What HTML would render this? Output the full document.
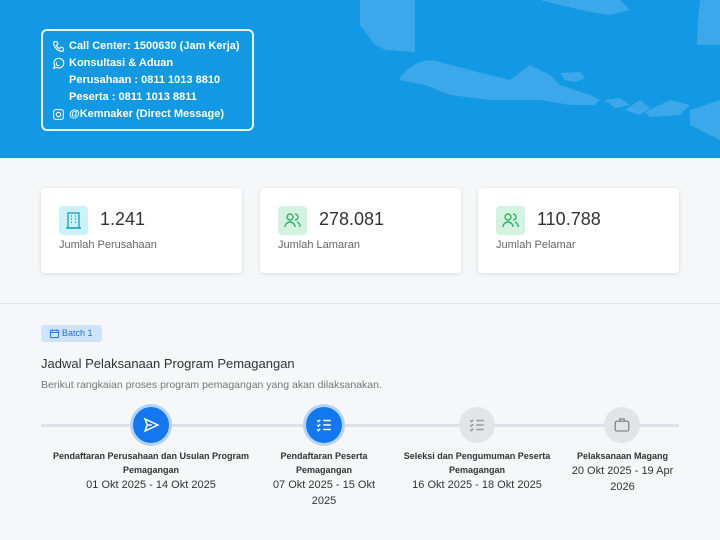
<!DOCTYPE html>
<html><head><meta charset="utf-8"><style>
*{margin:0;padding:0;box-sizing:border-box}
body{width:720px;height:540px;overflow:hidden;background:#f6f7f9;font-family:"Liberation Sans",sans-serif;position:relative}
.hdr{position:absolute;left:0;top:0;width:720px;height:158px;background:#1398e3;overflow:hidden}
.box{position:absolute;left:41px;top:29px;width:213px;height:102px;border:2px solid #e6f3fc;border-radius:6px;color:#fff;font-weight:bold;font-size:11px}
.box div{position:absolute;left:26px;white-space:nowrap}
.card{position:absolute;top:188px;width:201px;height:85px;background:#fff;border-radius:4px;box-shadow:0 1px 4px rgba(0,0,0,.12)}
.ic{position:absolute;left:18px;top:18px;width:29px;height:29px;border-radius:4px}
.num{position:absolute;left:59px;top:21px;font-size:18px;color:#333}
.lbl{position:absolute;left:18px;top:51px;font-size:11px;color:#666}
.step{position:absolute;top:449px;text-align:center;font-size:10px;color:#333;line-height:14px}
.step b{font-size:9px;display:block;line-height:14px;color:#333}
.step span{font-size:11px;line-height:16px;display:block}
.c{position:absolute;top:407px;width:36px;height:36px;border-radius:50%;display:flex;align-items:center;justify-content:center}
</style></head><body>
<div class="hdr">
<svg width="720" height="158" style="position:absolute;left:0;top:0">
<g fill="#3aa8eb">
<path d="M360 25 L375 45 L385 50 L415 52 L415 0 L360 0Z"/>
<path d="M400 77 Q420 55 440 62 L470 70 L510 80 L530 65 L550 75 L560 85 L590 95 L600 100 L595 105 L570 105 L540 100 L490 100 L450 95 L425 85 L400 80Z"/>
<path d="M560 73 L580 72 L585 78 L575 82 L565 80Z"/>
<path d="M605 100 L620 98 L630 105 L615 108Z M625 110 L640 100 L650 108 L640 115Z M645 112 L670 100 L690 105 L680 115 L650 117Z"/>
<path d="M690 110 L720 100 L720 140 L700 130 L690 125Z"/>
<path d="M540 0 L620 0 L630 10 L610 15 L590 12 L560 5Z M700 0 L720 0 L720 45 L697 45 L698 20Z"/>
<path d="M485 95 L495 96 L495 100 L485 99Z"/>
</g></svg>
<div class="box">
<svg style="position:absolute;left:9px;top:9px" width="13" height="13" viewBox="0 0 24 24" fill="none" stroke="#fff" stroke-width="2"><path d="M5 3h4l2 5-3 2a11 11 0 0 0 6 6l2-3 5 2v4a2 2 0 0 1-2 2A17 17 0 0 1 3 5a2 2 0 0 1 2-2"/></svg>
<svg style="position:absolute;left:9px;top:26px" width="13" height="13" viewBox="0 0 24 24" fill="none" stroke="#fff" stroke-width="2"><path d="M3 21l2-5a9 9 0 1 1 3 3z"/><path d="M9 10a1 1 0 0 0 5 5"/></svg>
<svg style="position:absolute;left:9px;top:77px" width="13" height="13" viewBox="0 0 24 24" fill="none" stroke="#fff" stroke-width="2"><rect x="3" y="3" width="18" height="18" rx="4"/><circle cx="12" cy="12" r="4"/></svg>
<div style="top:9px">Call Center: 1500630 (Jam Kerja)</div>
<div style="top:26px">Konsultasi &amp; Aduan</div>
<div style="top:43px">Perusahaan : 0811 1013 8810</div>
<div style="top:60px">Peserta : 0811 1013 8811</div>
<div style="top:77px">@Kemnaker (Direct Message)</div>
</div>
</div>
<div class="card" style="left:41px"><div class="ic" style="background:#cdf1f8"><svg width="29" height="29" viewBox="0 0 29 29" fill="none" stroke="#1ba8c4" stroke-width="1.4"><rect x="9" y="7" width="11" height="15"/><path d="M12 10h1M16 10h1M12 13h1M16 13h1M12 16h1M16 16h1M7 22h15"/></svg></div><div class="num">1.241</div><div class="lbl">Jumlah Perusahaan</div></div>
<div class="card" style="left:260px"><div class="ic" style="background:#d3f3e0"><svg width="29" height="29" viewBox="0 0 29 29" fill="none" stroke="#2fb467" stroke-width="1.4"><circle cx="12" cy="11" r="3"/><path d="M7 21a5 5 0 0 1 10 0M17 8a3 3 0 0 1 0 6M19 16a5 5 0 0 1 3 5"/></svg></div><div class="num">278.081</div><div class="lbl">Jumlah Lamaran</div></div>
<div class="card" style="left:478px"><div class="ic" style="background:#d3f3e0"><svg width="29" height="29" viewBox="0 0 29 29" fill="none" stroke="#2fb467" stroke-width="1.4"><circle cx="12" cy="11" r="3"/><path d="M7 21a5 5 0 0 1 10 0M17 8a3 3 0 0 1 0 6M19 16a5 5 0 0 1 3 5"/></svg></div><div class="num">110.788</div><div class="lbl">Jumlah Pelamar</div></div>
<div style="position:absolute;left:0;top:303px;width:720px;height:1px;background:#e3e5e8"></div>
<div style="position:absolute;left:41px;top:325px;width:61px;height:17px;background:#cfe3fb;border-radius:3px;color:#1f6fd1;font-size:9px;line-height:17px;padding-left:21px">Batch 1
<svg style="position:absolute;left:8px;top:3px" width="11" height="11" viewBox="0 0 24 24" fill="none" stroke="#1f6fd1" stroke-width="2"><rect x="3" y="5" width="18" height="16" rx="2"/><path d="M3 10h18M8 3v4M16 3v4"/></svg></div>
<div style="position:absolute;left:41px;top:356px;font-size:13px;color:#333">Jadwal Pelaksanaan Program Pemagangan</div>
<div style="position:absolute;left:41px;top:379px;font-size:10.5px;color:#777">Berikut rangkaian proses program pemagangan yang akan dilaksanakan.</div>
<div style="position:absolute;left:41px;top:424px;width:638px;height:3px;background:#dde0e4"></div>
<div class="c" style="left:133px;background:#1377f0;box-shadow:0 0 0 3px #b3d3fa"><svg width="18" height="18" viewBox="0 0 24 24" fill="none" stroke="#fff" stroke-width="2"><path d="M4 4l17 8-17 8 3-8z M7 12h6"/></svg></div>
<div class="c" style="left:306px;background:#1377f0;box-shadow:0 0 0 3px #b3d3fa"><svg width="18" height="18" viewBox="0 0 24 24" fill="none" stroke="#fff" stroke-width="2"><path d="M11 6h10M11 12h10M11 18h10M3 6l1.5 1.5L7 5M3 12l1.5 1.5L7 11M3 18l1.5 1.5L7 17"/></svg></div>
<div class="c" style="left:459px;background:#e2e4e8"><svg width="18" height="18" viewBox="0 0 24 24" fill="none" stroke="#999" stroke-width="2"><path d="M11 6h10M11 12h10M11 18h10M3 6l1.5 1.5L7 5M3 12l1.5 1.5L7 11M3 18l1.5 1.5L7 17"/></svg></div>
<div class="c" style="left:604px;background:#e2e4e8"><svg width="18" height="18" viewBox="0 0 24 24" fill="none" stroke="#888" stroke-width="1.8"><rect x="3" y="7" width="18" height="13" rx="2"/><path d="M9 7V4h6v3"/></svg></div>
<div class="step" style="left:46px;width:210px"><b>Pendaftaran Perusahaan dan Usulan Program Pemagangan</b><span>01 Okt 2025 - 14 Okt 2025</span></div>
<div class="step" style="left:269px;width:110px"><b>Pendaftaran Peserta Pemagangan</b><span>07 Okt 2025 - 15 Okt 2025</span></div>
<div class="step" style="left:397px;width:160px"><b>Seleksi dan Pengumuman Peserta Pemagangan</b><span>16 Okt 2025 - 18 Okt 2025</span></div>
<div class="step" style="left:565px;width:115px"><b>Pelaksanaan Magang</b><span>20 Okt 2025 - 19 Apr 2026</span></div>
</body></html>
